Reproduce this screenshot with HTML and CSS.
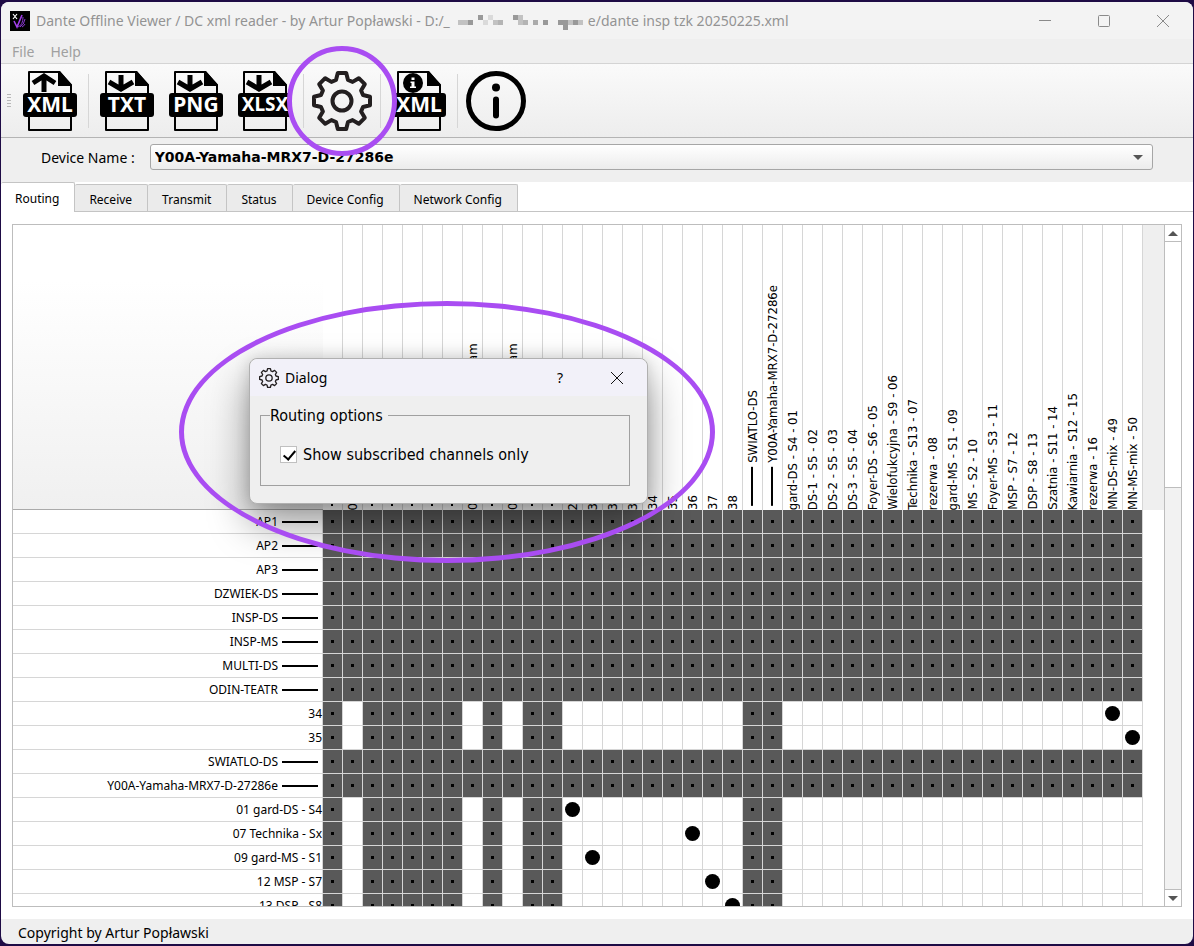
FILE: index.html
```
<!DOCTYPE html>
<html lang="en">
<head>
    <meta charset="UTF-8">
    <meta name="viewport" content="width=device-width, initial-scale=1.0">
    <title>Dante Offline Viewer / DC xml reader</title>
    <link rel="stylesheet" href="styles.css">
</head>
<body>
    <div class="window">
        <header class="title-bar">
            <svg class="app-logo" viewBox="0 0 20 20">
                <rect width="20" height="20" fill="#000"></rect>
                <path d="M3 3l4 5M7 3l-4 5" stroke="#fff" stroke-width="1.2"></path>
                <path d="M4 10l3 6 5-12" fill="none" stroke="#a03fe8" stroke-width="1.6"></path>
                <path d="M8 16q5-2 5-10M10 16q4-2 5-8M12 16q2-1 3-3" fill="none" stroke="#8a38d0" stroke-width="1"></path>
            </svg>
            <span class="title-text">Dante Offline Viewer / DC xml reader - by Artur Popławski - D:/_</span>
            <svg class="mosaic" viewBox="0 0 130 20">
                <g fill="#999">
                    <rect x="10" y="9" width="5" height="5"></rect>
                    <rect x="20" y="4" width="5" height="5"></rect>
                    <rect x="40" y="9" width="5" height="5" opacity=".7"></rect>
                    <rect x="55" y="4" width="5" height="5"></rect>
                    <rect x="65" y="9" width="5" height="5" opacity=".7"></rect>
                    <rect x="75" y="9" width="5" height="5" opacity=".8"></rect>
                    <rect x="85" y="9" width="5" height="5"></rect>
                    <rect x="100" y="9" width="10" height="5"></rect>
                    <rect x="105" y="14" width="5" height="5"></rect>
                    <rect x="115" y="9" width="5" height="5"></rect>
                </g>
                <g fill="#c2c2c2">
                    <rect x="0" y="9" width="10" height="5"></rect>
                    <rect x="25" y="9" width="5" height="5" opacity=".5"></rect>
                    <rect x="30" y="4" width="5" height="5" opacity=".5"></rect>
                    <rect x="35" y="9" width="5" height="5"></rect>
                    <rect x="60" y="4" width="5" height="10"></rect>
                    <rect x="110" y="9" width="5" height="5"></rect>
                    <rect x="120" y="9" width="5" height="5"></rect>
                </g>
            </svg>
            <span class="title-text">e/dante insp tzk 20250225.xml</span>
            <div class="window-buttons">
                <button aria-label="Minimize"><svg viewBox="0 0 12 12"><path d="M0 5.5h12"></path></svg></button>
                <button aria-label="Maximize"><svg viewBox="0 0 12 12"><rect x=".5" y=".5" width="11" height="11" rx="1"></rect></svg></button>
                <button aria-label="Close"><svg viewBox="0 0 12 12"><path d="M0 0l12 12M12 0L0 12"></path></svg></button>
            </div>
        </header>

        <nav class="menu-bar">
            <button>File</button>
            <button>Help</button>
        </nav>

        <div class="toolbar">
            <span class="grip"></span>
            <button aria-label="Open XML">
                <svg viewBox="0 0 60 60">
                    <path class="sheet" d="M9 22V1h30l12 13v8M9 45v14h42V45"></path>
                    <path d="M38 0v15h14v-1L40 0z"></path>
                    <path class="arrow" d="M24 21V7M13 12l11-7 11 7"></path>
                    <rect x="3" y="22" width="54" height="24" rx="3"></rect>
                    <text x="30" y="41">XML</text>
                </svg>
            </button>
            <span class="separator"></span>
            <button aria-label="Export TXT">
                <svg viewBox="0 0 60 60">
                    <path class="sheet" d="M9 22V1h30l12 13v8M9 45v14h42V45"></path>
                    <path d="M38 0v15h14v-1L40 0z"></path>
                    <path class="arrow" d="M24 4v13M12 11l12 7 12-7"></path>
                    <rect x="3" y="22" width="54" height="24" rx="3"></rect>
                    <text x="30" y="41">TXT</text>
                </svg>
            </button>
            <button aria-label="Export PNG">
                <svg viewBox="0 0 60 60">
                    <path class="sheet" d="M9 22V1h30l12 13v8M9 45v14h42V45"></path>
                    <path d="M38 0v15h14v-1L40 0z"></path>
                    <path class="arrow" d="M24 4v13M12 11l12 7 12-7"></path>
                    <rect x="3" y="22" width="54" height="24" rx="3"></rect>
                    <text x="30" y="41">PNG</text>
                </svg>
            </button>
            <button aria-label="Export XLSX">
                <svg viewBox="0 0 60 60">
                    <path class="sheet" d="M9 22V1h30l12 13v8M9 45v14h42V45"></path>
                    <path d="M38 0v15h14v-1L40 0z"></path>
                    <path class="arrow" d="M24 4v13M12 11l12 7 12-7"></path>
                    <rect x="3" y="22" width="54" height="24" rx="3"></rect>
                    <text class="small" x="30" y="40">XLSX</text>
                </svg>
            </button>
            <span class="separator"></span>
            <button class="options" aria-label="Options">
                <svg viewBox="-30 -30 60 60">
                    <path class="gear" d="M-4.2-28H4.2L6-21 10.6-19.1 16.8-22.8 22.8-16.8 19.1-10.6 21-6 28-4.2V4.2L21 6 19.1 10.6 22.8 16.8 16.8 22.8 10.6 19.1 6 21 4.2 28H-4.2L-6 21-10.6 19.1-16.8 22.8-22.8 16.8-19.1 10.6-21 6-28 4.2V-4.2L-21-6-19.1-10.6-22.8-16.8-16.8-22.8-10.6-19.1-6-21z"></path>
                    <circle class="gear" r="9.5"></circle>
                </svg>
                <span class="ring"></span>
            </button>
            <span class="separator"></span>
            <button aria-label="XML info">
                <svg viewBox="0 0 60 60">
                    <path class="sheet" d="M9 22V1h30l12 13v8M9 45v14h42V45"></path>
                    <path d="M38 0v15h14v-1L40 0z"></path>
                    <circle cx="24" cy="12" r="10"></circle>
                    <path class="white" d="M22.5 6.5h3V9h-3zM21.5 10.500h4v5H27V17h-6v-1.500h1.500V12h-1z"></path>
                    <rect x="3" y="22" width="54" height="24" rx="3"></rect>
                    <text x="30" y="41">XML</text>
                </svg>
            </button>
            <span class="separator"></span>
            <button aria-label="About">
                <svg viewBox="0 0 60 60">
                    <circle cx="30" cy="30" r="27.5" fill="none" stroke="#000" stroke-width="5"></circle>
                    <circle cx="30" cy="16.5" r="4"></circle>
                    <path d="M30 28.5v16" stroke="#000" stroke-width="6" stroke-linecap="round"></path>
                </svg>
            </button>
        </div>

        <div class="device-row">
            <label for="device">Device Name :</label>
            <div class="select-wrap">
                <select id="device">
                    <option>Y00A-Yamaha-MRX7-D-27286e</option>
                </select>
            </div>
        </div>

        <main class="content">
            <div class="tabs" role="tablist">
                <button role="tab" class="active" aria-selected="true">Routing</button>
                <button role="tab">Receive</button>
                <button role="tab">Transmit</button>
                <button role="tab">Status</button>
                <button role="tab">Device Config</button>
                <button role="tab">Network Config</button>
            </div>

            <div class="matrix-frame">
                <div class="matrix-view">
                    <table class="matrix">
                        <thead><tr id="matrix-head"></tr></thead>
                        <tbody id="matrix-body"></tbody>
                    </table>
                </div>
                <div class="scrollbar">
                    <button class="up" aria-label="Scroll up"></button>
                    <div class="thumb"></div>
                    <div class="track"></div>
                    <button class="down" aria-label="Scroll down"></button>
                </div>
            </div>
        </main>

        <footer class="status-bar">Copyright by Artur Popławski</footer>
    </div>

    <div class="dialog" role="dialog" aria-label="Dialog">
        <div class="dialog-title">
            <svg viewBox="-30 -30 60 60">
                <path class="gear" d="M-4.2-28H4.2L6-21 10.6-19.1 16.8-22.8 22.8-16.8 19.1-10.6 21-6 28-4.2V4.2L21 6 19.1 10.6 22.8 16.8 16.8 22.8 10.6 19.1 6 21 4.2 28H-4.2L-6 21-10.6 19.1-16.8 22.8-22.8 16.8-19.1 10.6-21 6-28 4.2V-4.2L-21-6-19.1-10.6-22.8-16.8-16.8-22.8-10.6-19.1-6-21z"></path>
                <circle class="gear" r="9.5"></circle>
            </svg>
            <span>Dialog</span>
            <button class="help">?</button>
            <button class="close" aria-label="Close dialog"><svg viewBox="0 0 12 12"><path d="M0 0l12 12M12 0L0 12"></path></svg></button>
        </div>
        <fieldset>
            <legend>Routing options</legend>
            <label class="check">
                <input type="checkbox" checked>
                Show subscribed channels only
            </label>
        </fieldset>
    </div>
    <div class="ellipse"></div>

    <script src="matrix.js"></script>
</body>
</html>
```
FILE: styles.css
```
* {
    box-sizing: border-box;
}

body {
    margin: 0;
    height: 100vh;
    padding: 2px 1px;
    overflow: hidden;
    background: #1e0b45;
    font-family: "Noto Sans", "Open Sans", sans-serif;
    font-size: 14px;
    color: #000;
}

button {
    border: none;
    background: none;
    padding: 0;
    font: inherit;
    color: inherit;
}

.window {
    height: 100%;
    display: flex;
    flex-direction: column;
    background: #efefef;
    border-radius: 8px;
    overflow: hidden;
}

/* Title bar */
.title-bar {
    display: flex;
    align-items: center;
    height: 37px;
    padding: 0 16px 0 9px;
    background: #f3f3f3;
    color: #939393;
    white-space: nowrap;
}

.app-logo {
    width: 20px;
    height: 20px;
    margin-right: 6px;
}

.mosaic {
    width: 130px;
    height: 20px;
    margin-left: 8px;
}

.window-buttons {
    display: flex;
    gap: 47px;
    margin-left: auto;
    padding-right: 8px;
}

.window-buttons button {
    display: flex;
}

.window-buttons svg {
    width: 12px;
    height: 12px;
    fill: none;
    stroke: #8a8a8a;
}

.menu-bar {
    display: flex;
    gap: 16px;
    height: 25px;
    padding-left: 11px;
    color: #a0a0a0;
    border-bottom: 1px solid #d4d4d4;
}

/* Toolbar */
.toolbar {
    display: flex;
    align-items: center;
    gap: 9px;
    height: 74px;
    padding-left: 6px;
    background: linear-gradient(#fafafa, #ededed);
    border-bottom: 1px solid #b4b4b4;
}

.toolbar button {
    width: 60px;
    height: 60px;
}

.toolbar svg {
    display: block;
    width: 60px;
    height: 60px;
}

.toolbar text {
    fill: #fff;
    font-size: 21px;
    font-weight: 700;
    text-anchor: middle;
}

.toolbar .small {
    font-size: 19px;
}

.toolbar .white {
    fill: #fff;
}

.sheet {
    fill: none;
    stroke: #000;
    stroke-width: 2;
    stroke-linejoin: round;
}

.arrow {
    fill: none;
    stroke: #000;
    stroke-width: 5;
}

.gear {
    fill: none;
    stroke: #231f20;
    stroke-width: 4;
    stroke-linejoin: round;
}

.grip {
    width: 4px;
    height: 16px;
    background: radial-gradient(circle, #b8b8b8 1px, transparent 1px) 0 0 / 2px 3px;
}

.separator {
    width: 1px;
    height: 54px;
    margin: 0 -1px;
    background: #d6d6d6;
}

.options {
    position: relative;
}

.ring {
    position: absolute;
    inset: -25px;
    z-index: 2;
    border: 5px solid #a94df2;
    border-radius: 50%;
    pointer-events: none;
}

/* Device selector */
.device-row {
    display: flex;
    align-items: center;
    gap: 15px;
    height: 44px;
    padding: 0 40px 6px;
}

.select-wrap {
    position: relative;
    flex: 1;
}

.select-wrap::after {
    content: "";
    position: absolute;
    top: 11px;
    right: 10px;
    border: 5px solid transparent;
    border-top-color: #555;
    border-bottom: none;
}

select {
    appearance: none;
    display: block;
    width: 100%;
    height: 26px;
    padding: 0 4px;
    border: 1px solid #a6a6a6;
    border-radius: 3px;
    background: linear-gradient(#fff, #ececec);
    color: #000;
    font: bold 14px "DejaVu Sans", sans-serif;
}

/* Tabs */
.content {
    flex: 1;
    min-height: 0;
    display: flex;
    flex-direction: column;
    background: #fff;
}

.tabs {
    display: flex;
    align-items: flex-end;
    height: 30px;
    border-bottom: 1px solid #c4c4c4;
    font-size: 12px;
}

.tabs button {
    height: 27px;
    padding: 2px 15px 0 14px;
    background: #ebebeb;
    border: 1px solid #c4c4c4;
    border-left: none;
    border-bottom: none;
    border-radius: 2px 2px 0 0;
}

.tabs .active {
    height: 30px;
    margin-bottom: -1px;
    background: #fff;
}

/* Routing matrix */
.matrix-frame {
    flex: 1;
    min-height: 0;
    display: flex;
    margin: 12px 11px;
    border: 1px solid #bdbdbd;
}

.matrix-view {
    flex: 1;
    overflow: hidden;
}

.matrix {
    width: 100%;
    table-layout: fixed;
    border-spacing: 0;
}

.matrix th,
.matrix td {
    padding: 0;
    font-weight: 400;
    border-right: 1px solid #d6d6d6;
    border-bottom: 1px solid #d6d6d6;
}

.matrix thead th {
    width: 20px;
    height: 285px;
    border-bottom: none;
    vertical-align: bottom;
    background: #fff;
}

.matrix thead .corner {
    width: 310px;
    border-right: none;
    border-bottom: 1px solid #aaa;
    background: linear-gradient(#fff 20%, #f0f0f0);
}

.matrix thead .filler {
    width: auto;
    border: none;
    background: #efefef;
}

.matrix tbody .filler {
    border: none;
}

.column-label {
    display: flex;
    align-items: center;
    gap: 4px;
    width: 19px;
    max-height: 285px;
    writing-mode: vertical-rl;
    transform: rotate(180deg);
    font: 13px/19px "DejaVu Sans Condensed", "DejaVu Sans", sans-serif;
    white-space: nowrap;
}

.column-label.device::before {
    content: "";
    width: 2px;
    height: 39px;
    margin-top: 4px;
    background: #000;
}

.column-label .tail {
    margin-top: 137px;
}

.row-label {
    display: flex;
    align-items: center;
    justify-content: flex-end;
    height: 23px;
    font-size: 12px;
    line-height: 23px;
    white-space: nowrap;
}

.row-label.device::after {
    content: "";
    width: 36px;
    height: 2px;
    margin: 0 4px;
    background: #000;
}

.matrix tbody th {
    height: 24px;
}

.matrix .blocked {
    background: #595959;
}

.matrix .blocked::before {
    content: "";
    display: block;
    width: 3px;
    height: 3px;
    margin: 0 auto;
    background: #000;
}

.matrix .linked::before {
    content: "";
    display: block;
    width: 15px;
    height: 15px;
    margin: 0 auto;
    border-radius: 50%;
    background: #000;
}

/* Scrollbar */
.scrollbar {
    display: flex;
    flex-direction: column;
    width: 17px;
    border-left: 1px solid #bdbdbd;
}

.scrollbar button {
    display: flex;
    align-items: center;
    justify-content: center;
    height: 17px;
}

.scrollbar button::before {
    content: "";
    border: 5px solid transparent;
}

.scrollbar .up {
    border-bottom: 1px solid #bdbdbd;
}

.scrollbar .up::before {
    border-top: none;
    border-bottom-color: #555;
}

.scrollbar .down {
    border-top: 1px solid #bdbdbd;
}

.scrollbar .down::before {
    border-bottom: none;
    border-top-color: #555;
}

.thumb {
    flex: 38;
    border-bottom: 1px solid #bdbdbd;
}

.track {
    flex: 62;
    background: #f2f2f2;
}

.status-bar {
    height: 25px;
    padding-left: 17px;
    line-height: 27px;
}

/* Options dialog */
.dialog {
    position: absolute;
    left: 249px;
    top: 358px;
    width: 399px;
    height: 146px;
    border: 1px solid #b0b0b0;
    border-radius: 8px;
    background: #efefef;
    box-shadow: 0 20px 40px rgba(0, 0, 0, 0.4), 0 0 16px rgba(0, 0, 0, 0.15);
}

.dialog-title {
    display: flex;
    align-items: center;
    height: 37px;
    padding: 0 24px 0 9px;
    background: #f2f1f9;
    border-radius: 8px 8px 0 0;
}

.dialog-title svg {
    width: 20px;
    height: 20px;
    margin-right: 6px;
}

.dialog-title .help {
    margin-left: auto;
}

.dialog-title .close {
    display: flex;
    margin-left: 48px;
}

.dialog-title .close svg {
    width: 12px;
    height: 12px;
    margin: 0;
    fill: none;
    stroke: #111;
}

fieldset {
    height: 80px;
    margin: 10px 17px 0 10px;
    padding: 20px 19px 0;
    border: 1px solid #a0a0a0;
    font: 16px "DejaVu Sans Condensed", "DejaVu Sans", sans-serif;
}

legend {
    margin-left: -10px;
    padding: 0 5px 0 0;
}

.check {
    display: flex;
    align-items: center;
    gap: 6px;
}

.check input {
    appearance: none;
    width: 17px;
    height: 17px;
    margin: 0;
    border: 1px solid #c0c0c0;
    background: #fff;
}

.check input::before {
    content: "";
    display: block;
    width: 5px;
    height: 10px;
    margin: 1px 0 0 5px;
    border: solid #000;
    border-width: 0 2px 2px 0;
    transform: rotate(40deg);
}

.ellipse {
    position: absolute;
    left: 179px;
    top: 301px;
    width: 536px;
    height: 262px;
    border: 5px solid #a94df2;
    border-radius: 50%;
    pointer-events: none;
}
```
FILE: matrix.js
```
// Columns flagged as device are group headers, the rest are channels
const columns = [
    { device: true }, { name: '0' }, { device: true }, { device: true },
    { device: true }, { device: true }, { device: true },
    { name: '0', tail: 'am' }, { device: true }, { name: '0', tail: 'am' },
    { device: true }, { device: true },
    { name: '2' }, { name: '3' }, { name: '3' }, { name: '3' },
    { name: '34' }, { name: '35' }, { name: '36' }, { name: '37' }, { name: '38' },
    { name: 'SWIATLO-DS', device: true },
    { name: 'Y00A-Yamaha-MRX7-D-27286e', device: true },
    { name: 'gard-DS - S4 - 01' }, { name: 'DS-1 - S5 - 02' },
    { name: 'DS-2 - S5 - 03' }, { name: 'DS-3 - S5 - 04' },
    { name: 'Foyer-DS - S6 - 05' }, { name: 'Wielofukcyjna - S9 - 06' },
    { name: 'Technika - S13 - 07' }, { name: 'rezerwa - 08' },
    { name: 'gard-MS - S1 - 09' }, { name: 'MS - S2 - 10' },
    { name: 'Foyer-MS - S3 - 11' }, { name: 'MSP - S7 - 12' },
    { name: 'DSP - S8 - 13' }, { name: 'Szatnia - S11 - 14' },
    { name: 'Kawiarnia - S12 - 15' }, { name: 'rezerwa - 16' },
    { name: 'MN-DS-mix - 49' }, { name: 'MN-MS-mix - 50' }
];

const rows = [
    { name: 'AP1', device: true },
    { name: 'AP2', device: true },
    { name: 'AP3', device: true },
    { name: 'DZWIEK-DS', device: true },
    { name: 'INSP-DS', device: true },
    { name: 'INSP-MS', device: true },
    { name: 'MULTI-DS', device: true },
    { name: 'ODIN-TEATR', device: true },
    { name: '34', link: 39 },
    { name: '35', link: 40 },
    { name: 'SWIATLO-DS', device: true },
    { name: 'Y00A-Yamaha-MRX7-D-27286e', device: true },
    { name: '01 gard-DS - S4', link: 12 },
    { name: '07 Technika - Sx', link: 18 },
    { name: '09 gard-MS - S1', link: 13 },
    { name: '12 MSP - S7', link: 19 },
    { name: '13 DSP - S8', link: 20 }
];

function columnHeader(col) {
    const tail = col.tail ? `<span class="tail">${col.tail}</span>` : '';
    return `<th><div class="column-label ${col.device ? 'device' : ''}">${col.name || ''}${tail}</div></th>`;
}

function cell(row, col, index) {
    if (row.device || col.device) return '<td class="blocked"></td>';
    return row.link === index ? '<td class="linked"></td>' : '<td></td>';
}

document.getElementById('matrix-head').innerHTML =
    '<th class="corner"></th>' + columns.map(columnHeader).join('') + '<th class="filler"></th>';

document.getElementById('matrix-body').innerHTML = rows.map(row =>
    `<tr><th><div class="row-label ${row.device ? 'device' : ''}">${row.name}</div></th>` +
    columns.map((col, i) => cell(row, col, i)).join('') +
    '<td class="filler"></td></tr>'
).join('');
```
